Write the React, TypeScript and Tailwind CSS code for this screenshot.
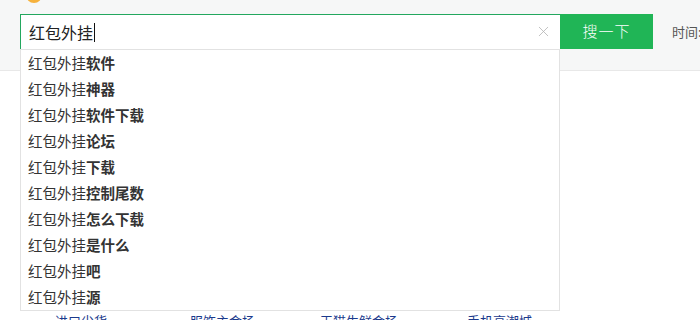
import { X } from 'lucide-react';

const suggestions = [
    '软件',
    '神器',
    '软件下载',
    '论坛',
    '下载',
    '控制尾数',
    '怎么下载',
    '是什么',
    '吧',
    '源',
];

const links = [
    { label: '进口尖货', w: 'w-[135px]' },
    { label: '服饰主会场', w: 'w-[130px]' },
    { label: '天猫生鲜会场', w: 'w-[147px]' },
    { label: '手机高潮城', w: 'w-[120px]' },
];

export default function App() {
    return (
        <div className="relative h-[320px] w-[700px] overflow-hidden bg-white font-['Noto_Sans_CJK_SC','Microsoft_YaHei',sans-serif]">
            {/* header band */}
            <div className="relative h-[71px] border-b border-[#e8e8e8] bg-[#f6f7f7]">
                <div className="absolute left-[26px] top-[-13px] h-[16px] w-[16px] rounded-full bg-[#f6b23c]" />
                <div className="flex pl-[20px] pt-[14px]">
                    <div className="relative flex h-[35px] w-[540px] shrink-0 items-center border-l border-t border-[#23a75e] bg-white pl-[8px]">
                        <span className="text-[16px] leading-none text-[#222]">红包外挂</span>
                        <span className="ml-[1px] h-[19px] w-[1px] bg-[#111]" />
                        <X size={17} strokeWidth={1.1} className="absolute right-[8px] top-[8px] text-[#b0b0b0]" />
                    </div>
                    <button className="h-[35px] w-[93px] shrink-0 bg-[#20b556] text-[15px] font-light tracking-[1px] text-white">
                        搜一下
                    </button>
                    <span className="ml-[19px] self-center whitespace-nowrap text-[13px] text-[#555]">时间:</span>
                </div>
            </div>

            {/* suggestion dropdown */}
            <div className="absolute left-[20px] top-[49px] w-[540px] border border-[#e2e2e2] bg-white">
                {suggestions.map((s) => (
                    <div key={s} className="flex h-[26px] items-center pl-[7px] text-[14.5px] leading-none text-[#333]">
                        <span>红包外挂</span>
                        <span className="font-bold">{s}</span>
                    </div>
                ))}
            </div>

            {/* links under the box */}
            <div className="flex pl-[55px] pt-[240px] text-[13px] text-[#1b3a8c]">
                {links.map((l) => (
                    <span key={l.label} className={`whitespace-nowrap ${l.w}`}>{l.label}</span>
                ))}
            </div>
        </div>
    );
}
